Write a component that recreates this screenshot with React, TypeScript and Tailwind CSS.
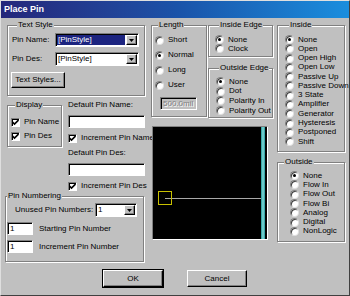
import React from "react";

const sunken =
  "border border-t-[#808080] border-l-[#808080] border-r-white border-b-white shadow-[inset_1px_1px_0_#000]";
const raised =
  "border border-t-white border-l-white border-r-black border-b-black shadow-[inset_-1px_-1px_0_#808080]";
const group =
  "border border-[#808080] shadow-[inset_1px_1px_0_#fff,1px_1px_0_#fff] min-w-0";

function Legend({ children, className = "" }: { children: React.ReactNode; className?: string }) {
  return (
    <legend className={`px-[1px] leading-[10px] whitespace-nowrap bg-[#c0c0c0] ${className}`}>{children}</legend>
  );
}

function Radio({ label, checked, h = "h-[10px]" }: { label: string; checked?: boolean; h?: string }) {
  return (
    <div className={`flex items-center gap-[4px] ${h}`}>
      <span className="w-[9px] h-[9px] shrink-0 rounded-full bg-white border border-t-[#808080] border-l-[#808080] border-r-[#dfdfdf] border-b-[#dfdfdf] shadow-[inset_1px_1px_0_#404040] flex items-center justify-center">
        {checked && <span className="w-[3px] h-[3px] rounded-full bg-black" />}
      </span>
      <span className="whitespace-nowrap">{label}</span>
    </div>
  );
}

function Check({ label }: { label: string }) {
  return (
    <div className="flex items-center gap-[4px] h-[10px] whitespace-nowrap">
      <span className={`w-[9px] h-[9px] shrink-0 bg-white ${sunken} flex items-center justify-center`}>
        <svg width="7" height="7" viewBox="0 0 7 7">
          <path d="M0.5 3 L2.5 5 L6.5 1" stroke="#000" strokeWidth="1.6" fill="none" />
        </svg>
      </span>
      <span>{label}</span>
    </div>
  );
}

function Select({ value, className = "", highlight }: { value: string; className?: string; highlight?: boolean }) {
  return (
    <div className={`flex items-center h-[14px] bg-white ${sunken} ${className}`}>
      <div className="flex-1 min-w-0 pl-[1px] flex items-center h-full">
        <span
          className={`px-[1px] leading-[10px] whitespace-nowrap ${
            highlight ? "bg-[#1c2480] text-white flex-1" : ""
          }`}
        >
          {value}
        </span>
      </div>
      <div className={`w-[11px] h-[10px] mx-[1px] bg-[#c0c0c0] ${raised} flex items-center justify-center`}>
        <svg width="5" height="3" viewBox="0 0 5 3">
          <path d="M0 0 H5 L2.5 3 Z" fill="#000" />
        </svg>
      </div>
    </div>
  );
}

function Field({ value = "", className = "" }: { value?: string; className?: string }) {
  return (
    <div className={`bg-white ${sunken} pl-[2px] flex items-center leading-[10px] ${className}`}>{value}</div>
  );
}

function Button({ label, def }: { label: string; def?: boolean }) {
  return (
    <div className={`w-[60px] h-[17px] ${def ? "outline outline-1 outline-black" : ""}`}>
      <div className={`w-full h-full bg-[#c0c0c0] ${raised} flex items-center justify-center`}>{label}</div>
    </div>
  );
}

function Preview() {
  return (
    <div className="ml-[1px] mt-[8px] w-[116px] h-[114px] bg-black border border-t-[#808080] border-l-[#808080] border-r-white border-b-white">
      <svg width="114" height="112" viewBox="0 0 114 112">
        <rect x="108" y="0" width="4" height="112" fill="#3aa8a8" />
        <rect x="109.5" y="0" width="1" height="112" fill="#9ee8e8" />
        <line x1="12" y1="71.5" x2="108" y2="71.5" stroke="#a8a8a8" strokeWidth="1" />
        <rect x="5.5" y="64.5" width="13" height="13" fill="none" stroke="#c8c000" strokeWidth="1" />
        <line x1="6" y1="64.5" x2="18" y2="64.5" stroke="#c8c000" strokeDasharray="1 1" strokeWidth="1" />
      </svg>
    </div>
  );
}

export default function App() {
  const inside = [
    "None",
    "Open",
    "Open High",
    "Open Low",
    "Passive Up",
    "Passive Down",
    "3 State",
    "Amplifier",
    "Generator",
    "Hysteresis",
    "Postponed",
    "Shift",
  ];
  const outside = ["None", "Flow In", "Flow Out", "Flow Bi", "Analog", "Digital", "NonLogic"];

  return (
    <div className="w-[350px] h-[296px] overflow-hidden bg-[#c0c0c0] border border-t-[#dfdfdf] border-l-[#dfdfdf] border-r-[#404040] border-b-[#404040] [font-family:'Liberation_Sans',Arial,sans-serif] text-[8px] leading-none text-black">
      {/* title bar */}
      <div className="h-[17px] bg-linear-to-r from-[#24267a] via-[#1a52a8] to-[#1a8ede] flex items-center pl-[3px]">
        <span className="text-white font-bold text-[9px]">Place Pin</span>
      </div>

      <div className="flex">
        {/* left column */}
        <div className="ml-[6px] w-[138px] flex flex-col">
          <fieldset className={`${group} mt-[2px] h-[76px] pl-[4px]`}>
            <Legend className="ml-[5px]">Text Style</Legend>
            <div className="mt-[3px] flex items-center">
              <span className="w-[43px]">Pin Name:</span>
              <Select value="[PinStyle]" highlight className="w-[84px]" />
            </div>
            <div className="mt-[5px] flex items-center">
              <span className="w-[43px]">Pin Des:</span>
              <Select value="[PinStyle]" className="w-[84px]" />
            </div>
            <div className={`mt-[6px] -ml-[1px] w-[54px] h-[16px] bg-[#c0c0c0] ${raised} flex items-center justify-center`}>
              Text Styles...
            </div>
          </fieldset>

          <div className="flex mt-[4px]">
            <fieldset className={`${group} w-[55px] h-[47px] pl-[3px]`}>
              <Legend className="ml-[4px]">Display</Legend>
              <div className="mt-[7px]">
                <Check label="Pin Name" />
              </div>
              <div className="mt-[4px]">
                <Check label="Pin Des" />
              </div>
            </fieldset>
            <div className="ml-[6px] w-[77px] flex flex-col">
              <span className="leading-[10px] whitespace-nowrap">Default Pin Name:</span>
              <Field className="mt-[5px] h-[13px]" />
              <div className="mt-[5px]">
                <Check label="Increment Pin Name" />
              </div>
              <span className="mt-[5px] leading-[10px] whitespace-nowrap">Default Pin Des:</span>
              <Field className="mt-[5px] h-[13px]" />
              <div className="mt-[5px]">
                <Check label="Increment Pin Des" />
              </div>
            </div>
          </div>

          <fieldset className={`${group} -ml-[2px] w-[139px] h-[71px]`}>
            <Legend className="ml-[1px]">Pin Numbering</Legend>
            <div className="mt-[2px] flex items-center">
              <span className="ml-[9px] w-[80px] whitespace-nowrap">Unused Pin Numbers:</span>
              <Select value="1" className="w-[42px]" />
            </div>
            <div className="mt-[5px] flex items-center">
              <Field value="1" className="ml-[1px] w-[26px] h-[13px]" />
              <span className="ml-[6px] whitespace-nowrap">Starting Pin Number</span>
            </div>
            <div className="mt-[5px] flex items-center">
              <Field value="1" className="ml-[1px] w-[26px] h-[13px]" />
              <span className="ml-[6px] whitespace-nowrap">Increment Pin Number</span>
            </div>
          </fieldset>
        </div>

        {/* right area */}
        <div className="ml-[6px] flex">
          <div className="w-[122px] flex flex-col">
            <div className="flex">
              <fieldset className={`${group} mt-[2px] w-[56px] h-[97px] pl-[3px]`}>
                <Legend className="ml-[3px]">Length</Legend>
                <div className="mt-[5px] flex flex-col gap-[5px]">
                  <Radio label="Short" />
                  <Radio label="Normal" checked />
                  <Radio label="Long" />
                  <Radio label="User" />
                </div>
                <div className={`mt-[7px] ml-[5px] w-[37px] h-[13px] bg-[#c0c0c0] ${sunken} flex items-center pl-[2px] text-[#808080] [text-shadow:1px_1px_0_#fff]`}>
                  500.0mil
                </div>
              </fieldset>
              <div className="ml-[1px] w-[65px] flex flex-col">
                <fieldset className={`${group} mt-[2px] h-[37px] pl-[6px]`}>
                  <Legend className="ml-[4px]">Inside Edge</Legend>
                  <div className="mt-[5px]">
                    <Radio label="None" checked h="h-[9px]" />
                    <Radio label="Clock" h="h-[9px]" />
                  </div>
                </fieldset>
                <fieldset className={`${group} mt-[6px] h-[55px] pl-[7px]`}>
                  <Legend className="ml-[3px]">Outside Edge</Legend>
                  <div className="mt-[4px]">
                    <Radio label="None" checked h="h-[9.6px]" />
                    <Radio label="Dot" h="h-[9.6px]" />
                    <Radio label="Polarity In" h="h-[9.6px]" />
                    <Radio label="Polarity Out" h="h-[9.6px]" />
                  </div>
                </fieldset>
              </div>
            </div>
            <Preview />
          </div>

          <div className="ml-[4px] w-[68px] flex flex-col">
            <fieldset className={`${group} mt-[2px] h-[132px] pl-[7px]`}>
              <Legend className="ml-[4px]">Inside</Legend>
              <div className="mt-[5px]">
                {inside.map((l, i) => (
                  <Radio key={l} label={l} checked={i === 0} h="h-[9.27px]" />
                ))}
              </div>
            </fieldset>
            <fieldset className={`${group} mt-[5px] h-[85px] pl-[12px]`}>
              <Legend className="-ml-[6px]">Outside</Legend>
              <div className="mt-[4px]">
                {outside.map((l, i) => (
                  <Radio key={l} label={l} checked={i === 0} h="h-[9.3px]" />
                ))}
              </div>
            </fieldset>
          </div>
        </div>
      </div>

      {/* buttons */}
      <div className="flex mt-[8px] ml-[102px] gap-[24px]">
        <Button label="OK" def />
        <Button label="Cancel" />
      </div>
    </div>
  );
}
